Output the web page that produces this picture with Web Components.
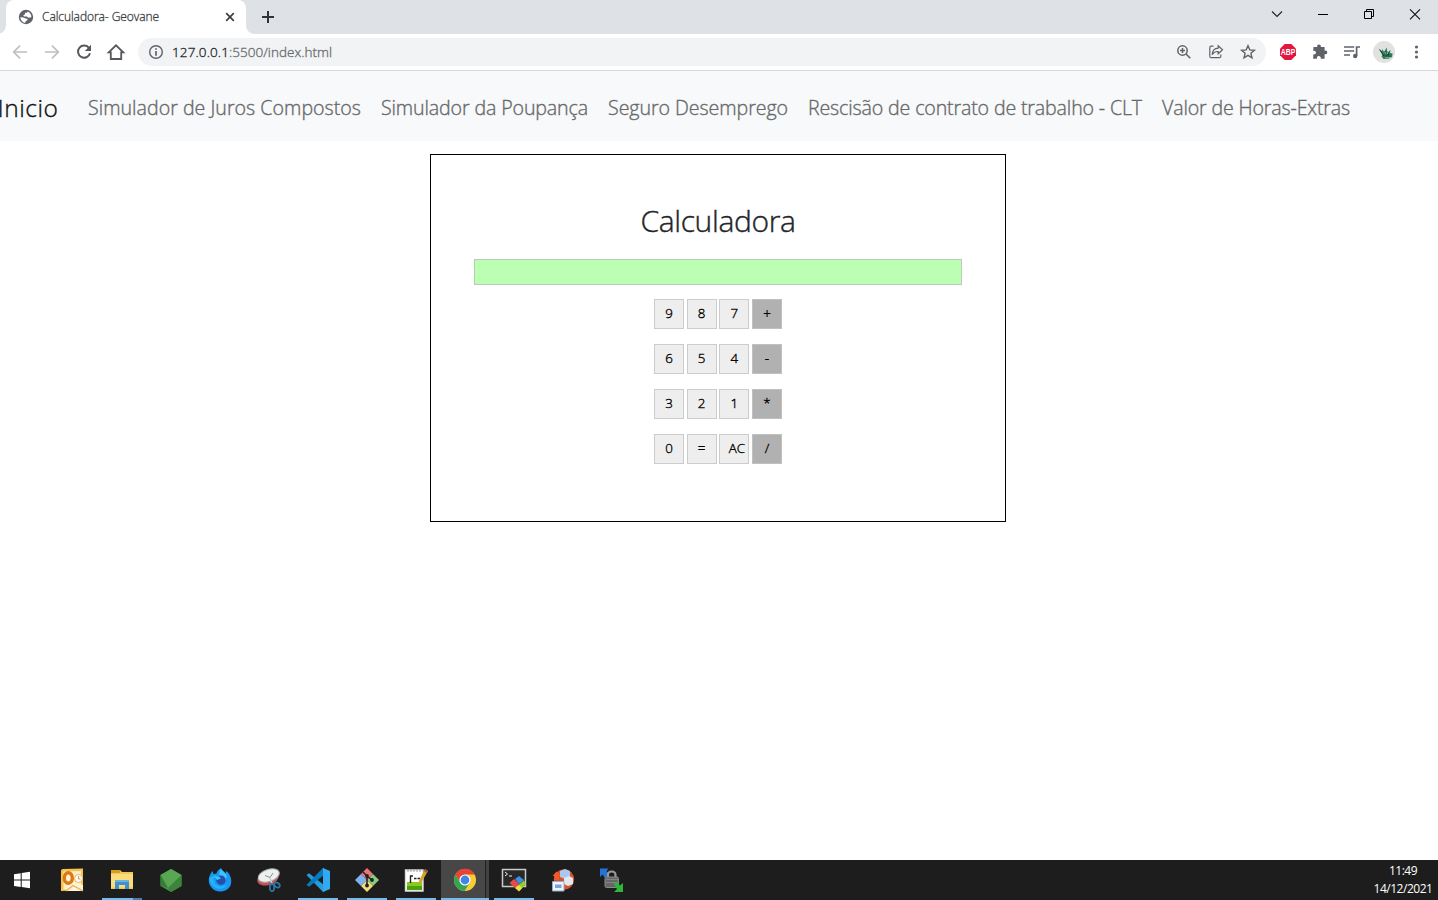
<!DOCTYPE html>
<html lang="pt-BR">
<head>
<meta charset="utf-8">
<title>Calculadora- Geovane</title>
<style>
html,body{margin:0;height:100%;overflow:hidden;background:#fff;font-family:"Open Sans","Noto Sans",sans-serif}
</style>
</head>
<body>
<desktop-screen></desktop-screen>
<script>
const define=(name,markup,setup)=>{
  const t=document.createElement('template');
  t.innerHTML=markup;
  customElements.define(name,class extends HTMLElement{
    connectedCallback(){
      if(this.shadowRoot)return;
      this.attachShadow({mode:'open'}).append(t.content.cloneNode(true));
      if(setup)setup(this,this.shadowRoot);
    }
  });
};

/* Label that tracks its letters to fill the width given in w */
define('fit-text',`<style>:host{display:block;white-space:nowrap;line-height:1}span{display:inline-block;white-space:pre}</style><span><slot></slot></span>`,(el,root)=>{
  const w=+el.getAttribute('w'),s=root.querySelector('span');
  el.style.width=w+'px';
  const n=el.textContent.length;
  s.style.letterSpacing=((w-s.getBoundingClientRect().width)/n)+'px';
});

define('tab-strip',`<style>
:host{display:flex;height:34px;background:#dee1e6;align-items:stretch;box-sizing:border-box;padding-left:6px}
.tab{width:240px;background:#fff;border-radius:8px 8px 0 0;display:flex;align-items:center;box-sizing:border-box;padding:0 9px 0 12px;position:relative}
.tab:before,.tab:after{content:"";position:absolute;bottom:0;width:8px;height:8px}
.tab:before{left:-8px;background:radial-gradient(circle at 0 0,transparent 7.5px,#fff 8px)}
.tab:after{right:-8px;background:radial-gradient(circle at 100% 0,transparent 7.5px,#fff 8px)}
fit-text{font-size:12px;color:#3c4043;margin-left:8px;flex:none;font-weight:300;-webkit-text-stroke:.3px}
.x{margin-left:auto}
.new{margin:10px 0 0 15px}
.win{margin-left:auto;display:flex;align-items:center;height:28px}
.win svg{width:46px;height:28px}
svg{display:block;flex:none}
</style>
<div class="tab">
<svg width="16" height="16" viewBox="0 0 16 16"><circle cx="8" cy="8" r="7.2" fill="#5f6368"/><path d="M2.4 8.2 5.6 8.4 7.4 9.6 9.6 9.8 9.2 11.6 7.6 12.2 7.4 13.8C4.6 13.6 2.4 11.2 2.4 8.2Z M9.6 2.4 9 3.8H7.2L6.8 5.4 5.2 6.2 6.2 7.4H9L10.4 8.8 13.4 8.2C13.6 5.6 12 3.2 9.6 2.4Z" fill="#fff"/></svg>
<fit-text w="117">Calculadora- Geovane</fit-text>
<svg class="x" width="14" height="14" viewBox="0 0 14 14"><path d="M3.2 3.2 10.8 10.8M10.8 3.2 3.2 10.8" stroke="#3c4043" stroke-width="1.7"/></svg>
</div>
<svg class="new" width="14" height="14" viewBox="0 0 14 14"><path d="M7 1V13M1 7H13" stroke="#303338" stroke-width="2"/></svg>
<div class="win">
<svg viewBox="0 0 46 28"><path d="M18 11.5 23 16.5 28 11.5" fill="none" stroke="#222" stroke-width="1.1"/></svg>
<svg viewBox="0 0 46 28"><path d="M18 14.5H28" stroke="#000"/></svg>
<svg viewBox="0 0 46 28"><path d="M18.5 11.5H25.5V18.5H18.5ZM20.5 11V9.5H27.5V16.5H26" fill="none" stroke="#000"/></svg>
<svg viewBox="0 0 46 28"><path d="M18 9.3 28 19.3M28 9.3 18 19.3" stroke="#111" stroke-width="1.1"/></svg>
</div>`);

define('tool-bar',`<style>
:host{display:flex;align-items:center;height:37px;box-sizing:border-box;border-bottom:1px solid #d7d9dc;background:#fff;padding:0 5px 0 4px}
svg{display:block;flex:none;width:32px;height:32px}
.url{display:flex;align-items:center;flex:none;width:1128px;height:28px;border-radius:14px;background:#f1f3f4;margin-left:6px;margin-right:6px;box-sizing:border-box;padding-left:2px;padding-right:2px}
fit-text{font-size:13.5px;color:#202124;padding-top:1px;font-weight:300;-webkit-text-stroke:.3px}
.dim{color:#66696e}
.sp{flex:1}
</style>
<svg viewBox="0 0 32 32"><path d="M23 16H10M16 9.7 9.7 16 16 22.3" fill="none" stroke="#bdbfc2" stroke-width="1.7"/></svg>
<svg viewBox="0 0 32 32"><path d="M9 16H22M16 9.7 22.3 16 16 22.3" fill="none" stroke="#bdbfc2" stroke-width="1.7"/></svg>
<svg viewBox="0 0 32 32"><path d="M21.1 12.1A6.1 6.1 0 1 0 22 17.2" fill="none" stroke="#55585d" stroke-width="2"/><path d="M23 8.8V15H16.8Z" fill="#55585d"/></svg>
<svg viewBox="0 0 32 32"><path d="M8.7 16.4 16 9.3 23.3 16.4H21.2V23H10.8V16.4Z" fill="none" stroke="#55585d" stroke-width="1.8"/></svg>
<div class="url">
<svg viewBox="0 0 32 32"><circle cx="16" cy="16" r="6.3" fill="none" stroke="#5f6368" stroke-width="1.4"/><path d="M16 15V19.8M16 12.2V13.8" stroke="#5f6368" stroke-width="1.7"/></svg>
<fit-text w="57">127.0.0.1</fit-text><fit-text class="dim" w="103">:5500/index.html</fit-text>
<div class="sp"></div>
<svg viewBox="0 0 32 32"><circle cx="14.5" cy="14.5" r="4.7" fill="none" stroke="#5f6368" stroke-width="1.5"/><path d="M18 18 22.3 22.3M12 14.5H17M14.5 12V17" stroke="#5f6368" stroke-width="1.5"/></svg>
<svg viewBox="0 0 32 32"><path d="M13.5 10.2H11.2Q9.8 10.2 9.8 11.7V20.2Q9.8 21.7 11.2 21.7H19.4Q20.8 21.7 20.8 20.2V18.5M18.2 9.8 22.5 13.8 18.2 17.8V15.5Q14 15.3 12.3 18.8 12.5 12.4 18.2 12.2Z" fill="none" stroke="#5f6368" stroke-width="1.2"/></svg>
<svg viewBox="0 0 32 32"><path d="M16 9.7 17.8 13.9 22.4 14.3 18.9 17.3 20 21.8 16 19.4 12 21.8 13.1 17.3 9.6 14.3 14.2 13.9Z" fill="none" stroke="#5f6368" stroke-width="1.4"/></svg>
</div>
<svg viewBox="0 0 32 32"><path d="M12.7 8H19.3L24 12.7V19.3L19.3 24H12.7L8 19.3V12.7Z" fill="#e3173e"/><text x="16" y="19.1" text-anchor="middle" font-family="Liberation Sans" font-size="8.8" font-weight="bold" fill="#fff" textLength="14.4" lengthAdjust="spacingAndGlyphs">ABP</text></svg>
<svg viewBox="0 0 32 32"><path d="M9.5 11H13.2Q12.7 8.4 15 8.4 17.3 8.4 16.8 11H20.6V14.7Q23.3 14.2 23.3 16.4 23.3 18.6 20.6 18.2V22.8H16.8Q17 20 14.7 20 12.7 20 12.9 22.8H9.2V18.5Q12 18.7 12 16.6 12 14.6 9.2 14.9Z" fill="#5f6368"/></svg>
<svg viewBox="0 0 32 32"><path d="M8 11H18.2M8 15H18.2M8 19H14M20.6 20V11H24" fill="none" stroke="#5f6368" stroke-width="1.7"/><circle cx="19.2" cy="20" r="2.2" fill="#5f6368"/></svg>
<svg viewBox="0 0 32 32"><circle cx="16" cy="16" r="11" fill="#e1e2e0"/><path d="M10.5 12.5 14 15 14.5 13 16 16 18.8 11.5 19 15 20 16 22.5 14 22 17 24.6 17.6 24 21 20 23H15.5L13.5 20.3 14.5 18.7Z" fill="#2d7a58"/><path d="M12 14 15.7 20 17.6 15 18 20.5 20.5 17.5 20.8 21" fill="none" stroke="#123f31" stroke-width=".9"/><path d="M17 22 22.5 21.7M17.2 18.5V15.8M19.5 18V16.5" stroke="#a9cbb0" stroke-width=".9"/></svg>
<svg viewBox="0 0 32 32"><g fill="#5f6368"><circle cx="16.5" cy="11" r="1.6"/><circle cx="16.5" cy="16" r="1.6"/><circle cx="16.5" cy="21" r="1.6"/></g></svg>`);

define('site-nav',`<style>
:host{display:flex;align-items:center;height:70px;background:#f8f9fa;box-sizing:border-box;gap:20px;padding-top:4px}
fit-text{flex:none;font-size:19.6px;color:#666869;line-height:30px;font-weight:300;-webkit-text-stroke:.35px}
.brand{font-size:24.5px;color:#111;margin-left:-2.5px;margin-right:9.5px;margin-top:-1px}
</style>
<fit-text class="brand" w="61">Inicio</fit-text>
<fit-text w="273">Simulador de Juros Compostos</fit-text>
<fit-text w="207">Simulador da Poupança</fit-text>
<fit-text w="180">Seguro Desemprego</fit-text>
<fit-text w="334">Rescisão de contrato de trabalho - CLT</fit-text>
<fit-text w="188">Valor de Horas-Extras</fit-text>`);

define('calc-key',`<style>
:host{display:flex;justify-content:center;width:30px;height:30px;box-sizing:border-box;border:1px solid #ccc;background:#eee;color:#000;font-size:13.33px;font-weight:300;-webkit-text-stroke:.35px;line-height:27px;white-space:nowrap}
:host([op]){background:#b1b1b1;border-color:#c0c0c0}
:host([wide]){padding-left:5px}
</style><slot></slot>`);

define('calc-card',`<style>
:host{display:flex;flex-direction:column;align-items:center;width:576px;height:368px;box-sizing:border-box;border:1px solid #000;margin:13px 2px 0 0;background:#fff}
h1{margin:43px 0 0;font-weight:300;-webkit-text-stroke:.4px;font-size:30px;line-height:46px;color:#212529;height:46px}
h1 fit-text{line-height:46px}
.out{width:488px;height:26px;box-sizing:border-box;border:1px solid #b9ccb5;background:#bcffb4;margin:15px 0 14px}
.keys{display:grid;grid-template-columns:30px 30px 30px 30px;column-gap:2.67px;row-gap:15px}
</style>
<h1><fit-text w="155">Calculadora</fit-text></h1>
<div class="out"></div>
<div class="keys">
<calc-key>9</calc-key><calc-key>8</calc-key><calc-key>7</calc-key><calc-key op>+</calc-key>
<calc-key>6</calc-key><calc-key>5</calc-key><calc-key>4</calc-key><calc-key op>-</calc-key>
<calc-key>3</calc-key><calc-key>2</calc-key><calc-key>1</calc-key><calc-key op>*</calc-key>
<calc-key>0</calc-key><calc-key>=</calc-key><calc-key wide>AC</calc-key><calc-key op>/</calc-key>
</div>`);

define('task-item',`<style>
:host{display:flex;width:49px;height:40px;flex:none;box-sizing:border-box;align-items:center;justify-content:center;position:relative}
:host([open]):after{content:"";position:absolute;left:5px;width:40px;bottom:0;height:2px;background:#76b9ed}
:host([multi]):after{background:linear-gradient(90deg,#76b9ed 31px,#4b7da5 31px)}
:host([active]){background:linear-gradient(90deg,#474747 44px,#222 44px,#222 45px,#414141 45px)}
:host([active]):after{left:0;width:48px}
::slotted(svg){display:block;width:26px;height:26px}
</style><slot></slot>`);

define('task-bar',`<style>
:host{display:flex;height:40px;background:#1d1d1d;color:#fff}
.start{width:44px;height:40px;flex:none;margin-right:4px}
.clock{margin-left:auto;width:70px;display:flex;flex-direction:column;align-items:center;padding-top:2px}
.clock fit-text{font-size:12px;line-height:18px}
.a{margin-left:-1px}
.b{margin-right:1px}
.act{margin:0 0 0 1px;width:48px}
</style>
<svg class="start" viewBox="0 0 44 40"><path d="M14 14.2 20.7 13.2V19.5H14ZM21.7 13 30 11.8V19.5H21.7ZM14 20.5H20.7V26.9L14 25.9ZM21.7 20.5H30V28.2L21.7 27Z" fill="#fff"/></svg>
<task-item class="a"><svg viewBox="0 0 26 26"><path d="M2 3.5Q2 2 4 2L24 1.5V23.5L2 24Z" fill="#f6c24f"/><path d="M4.5 4.5 22 4V22L4.5 22.5Z" fill="#fdeec6"/><ellipse cx="9.3" cy="11" rx="4" ry="5.2" fill="#fff3d4" stroke="#dc7a12" stroke-width="3.4"/><path d="M8 19.5 15 15.5 24 18V24H7Z" fill="#fdf3da"/><path d="M7 24 14 18.5 24 24" fill="none" stroke="#eeb04a" stroke-width="1.4"/><circle cx="19.5" cy="11.5" r="4" fill="#fffaf0" stroke="#eab765"/><path d="M19.5 9V12H21.5" fill="none" stroke="#b58a52" stroke-width=".8"/></svg></task-item>
<task-item class="b" style="margin-left:1px;margin-right:0" open multi><svg viewBox="0 0 26 26"><path d="M2 3H11L13 5H24V22H2Z" fill="#f4c650"/><path d="M2 3H11V6H2Z" fill="#d69d26"/><path d="M2 7H24V20.5H2Z" fill="#fbdc7c"/><path d="M6 13H20V22H16V18H10V22H6Z" fill="#3f91cd"/><path d="M6 13H20V15H6Z" fill="#68b3df"/></svg></task-item>
<task-item><svg viewBox="0 0 26 26"><path d="M13 2 23.5 8V19L13 25 2.5 19V8Z" fill="#479344"/><path d="M13 2 23.5 8 10 21 2.5 8Z" fill="#57a753"/><path d="M23.5 8V19L13 25 10 21Z" fill="#3e833d"/><path d="M2.5 8 10 21 2.5 19Z" fill="#397b39"/></svg></task-item>
<task-item><svg viewBox="0 0 26 26"><path d="M13 24.5A11.2 11.2 0 0 1 1.8 13.5C1.8 9.5 3.3 6.5 5.5 4L6.5 7 9.5 6.5C10 4 12 2.3 14 1.2 14.5 3.5 17 4.5 18.5 6.5L19.5 4C24 8 25.3 14 23.5 18.5 21.7 22.3 18 24.5 13 24.5Z" fill="#1a97f2"/><path d="M14 1.2C14.5 3.5 18.5 5 20 9L18 15 12 7Z" fill="#38c6ff"/><path d="M2 11C4 11 5 8 9 9L6.5 12 8 17 13 19.5 20 18C17 24 5 24 2 11Z" fill="#21b3fb"/><circle cx="14" cy="13.2" r="4.7" fill="#274eab"/><path d="M7 9 12 9.5 14 11.5 10 13Z" fill="#32c7ff"/></svg></task-item>
<task-item><svg viewBox="0 0 26 26"><ellipse cx="12" cy="11.5" rx="11" ry="6.5" transform="rotate(-18 12 11.5)" fill="#c45359"/><ellipse cx="12.7" cy="8.5" rx="11" ry="6" transform="rotate(-18 12.7 8.5)" fill="#eef0f0" stroke="#a7aaa9"/><path d="M9 8.5 14 10.5 17 6" fill="none" stroke="#86938e"/><path d="M14 11 16.5 18" stroke="#ccc" stroke-width="1.5"/><ellipse cx="16" cy="20.5" rx="2.2" ry="3.6" fill="none" stroke="#2d78a8" stroke-width="1.7"/><ellipse cx="21" cy="18" rx="3" ry="2.2" transform="rotate(35 21 18)" fill="none" stroke="#2d78a8" stroke-width="1.7"/></svg></task-item>
<task-item open><svg viewBox="0 0 26 26"><path d="M1.5 8 4 6.2 19 18V24.5L18 25Z" fill="#269ce0"/><path d="M1.5 18 4 19.8 19 8V1L18 .8Z" fill="#087ac0"/><path d="M18 1 25 4V22L18 25Z" fill="#35a9f0"/></svg></task-item>
<task-item open><svg viewBox="0 0 26 26"><path d="M13 1 19 7 13 13 7 7Z" fill="#ec7675"/><path d="M7 7 13 13 7 19 1 13Z" fill="#80b2f0"/><path d="M19 7 25 13 19 19 13 13Z" fill="#89cc7c"/><path d="M13 13 19 19 13 25 7 19Z" fill="#f4dc7b"/><path d="M9 5 13 9V19M13 9 18 13" fill="none" stroke="#252525" stroke-width="1.6"/><g fill="#222"><circle cx="13" cy="9" r="1.9"/><circle cx="18" cy="13" r="1.9"/><circle cx="13" cy="18.5" r="1.9"/></g></svg></task-item>
<task-item open><svg viewBox="0 0 26 26"><path d="M2.5 3H20V24H2.5Z" fill="#fff"/><path d="M4 15H19V23H4Z" fill="#8cc91f"/><path d="M4 19H19V23H4Z" fill="#4ba30b"/><path d="M2.5 24V3H20V24Z" fill="none" stroke="#ddd" stroke-width="1.4"/><path d="M5 2V5M8 2V5M11 2V5M14 2V5M17 2V5" stroke="#999"/><path d="M7.5 16V9H10M11 11.5H13.5M14.5 11.5H17" stroke="#202020" stroke-width="1.4" fill="none"/><path d="M22 2 25 4 18 16 15 17 16 14Z" fill="#d5a32c"/><path d="M22 2 25 4 24 6 21 4Z" fill="#8a6338"/></svg></task-item>
<task-item class="act" open active><svg viewBox="0 0 26 26"><circle cx="13" cy="13" r="11" fill="#f9cb35"/><path d="M3.4 7.5A11 11 0 0 1 22.6 7.5H13L8.2 15.7Z" fill="#e84335"/><path d="M3.4 7.5A11 11 0 0 0 12.5 24L17.8 15.8 13 18 8.2 15.7Z" fill="#33a653"/><circle cx="13" cy="13" r="5.6" fill="#fff"/><circle cx="13" cy="13" r="4.4" fill="#4285e8"/></svg></task-item>
<task-item open><svg viewBox="0 0 26 26"><path d="M1.5 2.5H24.5V19.5H1.5Z" fill="#282828" stroke="#c9c9c9" stroke-width="1.5"/><path d="M4 5 6.5 7 4 9M8 9H11" stroke="#eee" fill="none"/><path d="M8.5 16 13 12 18.5 17 14 21Z" fill="#e8494b"/><path d="M14 12 18 9 23 13 18.5 17Z" fill="#3b91e6"/><path d="M17.5 18 23 13.5 25 17 18.5 24 14.5 21Z" fill="#8fd02f"/><path d="M14 21 18 18 21 21 18 24.5Z" fill="#f1dc42"/></svg></task-item>
<task-item><svg viewBox="0 0 26 26"><circle cx="14" cy="12.5" r="10.2" fill="#d75328"/><path d="M6.5 4.5 11 8.5H9V13H4.5V9H2.5Z" fill="#f05b2d"/><path d="M10 4 15 2 20 4V10L15 12 10 10Z" fill="#a9c8ed"/><path d="M14 11 19 9 23 11V17L18 19 14 17Z" fill="#e1e8f0"/><path d="M2.5 14.5H14V24H2.5Z" fill="#edf4fd" stroke="#91aed0"/><path d="M5 17.5H11.5V21H5Z" fill="#7aa2dc"/></svg></task-item>
<task-item><svg viewBox="0 0 26 26"><path d="M1 1.500H9.500L7.500 4 10 7 6 11 3.500 7.500 1 10Z" fill="#2673d8"/><path d="M9 11V8Q9 4.500 12.700 4.500T16.500 8V11" fill="none" stroke="#9a9a9a" stroke-width="2.2"/><rect x="6" y="10" width="13.500" height="10.500" rx="1.500" fill="#666" stroke="#8b8b8b"/><path d="M7 12.500H19M7 15.500H19" stroke="#858585"/><path d="M14.500 16.500 17.500 14.500 21 18.500 24 16V25H15L18 22Z" fill="#2fb53c"/></svg></task-item>
<div class="clock"><fit-text w="28">11:49</fit-text><fit-text w="59">14/12/2021</fit-text></div>`);

define('desktop-screen',`<style>
:host{display:flex;flex-direction:column;width:1438px;height:900px;background:#fff}
main{flex:1;display:flex;justify-content:center;align-items:flex-start;min-height:0}
tab-strip,tool-bar,site-nav,task-bar{flex:none}
</style>
<tab-strip></tab-strip><tool-bar></tool-bar><site-nav></site-nav>
<main><calc-card></calc-card></main>
<task-bar></task-bar>`);
</script>
</body>
</html>
